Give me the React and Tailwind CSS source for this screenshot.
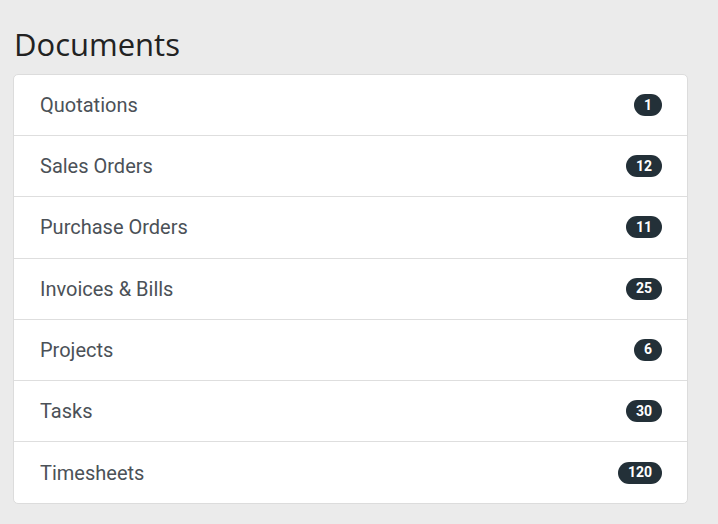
const docs = [
  { label: 'Quotations', count: 1 },
  { label: 'Sales Orders', count: 12 },
  { label: 'Purchase Orders', count: 11 },
  { label: 'Invoices & Bills', count: 25 },
  { label: 'Projects', count: 6 },
  { label: 'Tasks', count: 30 },
  { label: 'Timesheets', count: 120 },
]

export default function App() {
  return (
    <div className="min-h-screen bg-[#ebebeb] pl-[13px] pr-[30px] pt-[24px]">
      <h1 className="pl-px text-[31px] leading-[40px] text-[#222] font-['Open_Sans',sans-serif] mb-[10px]">
        Documents
      </h1>
      <ul className="bg-white border border-[#dcdcdc] rounded-[5px] font-['Roboto',sans-serif]">
        {docs.map((d, i) => (
          <li
            key={d.label}
            className={`h-[61.2px] flex items-center justify-between pl-[26px] pr-[25px] ${i < docs.length - 1 ? 'border-b border-[#dedede]' : ''}`}
          >
            <span className="text-[20px] text-[#4b5157]">{d.label}</span>
            <span className="min-w-[27px] h-[22px] px-[10px] rounded-full bg-[#233038] text-white text-[14px] font-bold flex items-center justify-center">
              {d.count}
            </span>
          </li>
        ))}
      </ul>
    </div>
  )
}
